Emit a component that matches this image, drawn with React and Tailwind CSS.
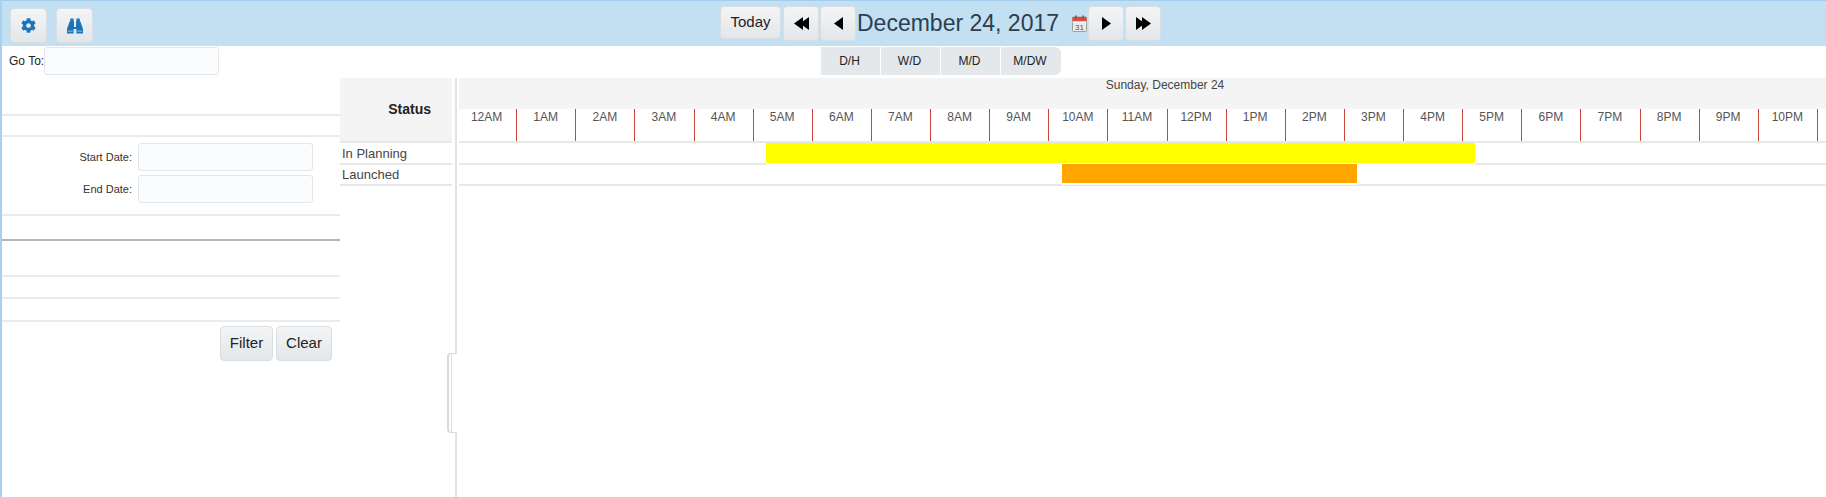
import React from "react";
import { FaCog } from "react-icons/fa";

const hours = ["12AM","1AM","2AM","3AM","4AM","5AM","6AM","7AM","8AM","9AM","10AM","11AM","12PM","1PM","2PM","3PM","4PM","5PM","6PM","7PM","8PM","9PM","10PM",""];
const btn = "flex items-center justify-center rounded border border-[#d9dee2] bg-gradient-to-b from-[#f3f4f5] to-[#e3e7ea]";

function Tri({ dir = "r", double }) {
  const one = dir === "r" ? "M0 0 L9 6.5 L0 13 Z" : "M9 0 L0 6.5 L9 13 Z";
  return (
    <svg width={double ? 15 : 9} height="13" viewBox={double ? "0 0 15 13" : "0 0 9 13"} fill="#000">
      <path d={one} />
      {double && <path d={one} transform="translate(6 0)" />}
    </svg>
  );
}

function Binoculars() {
  return (
    <svg width="16" height="16" viewBox="0 0 16 16" fill="#1b75bc">
      <path d="M3.2 0.5 H6.6 V3.2 H7 V9 H9 V3.2 H9.4 V0.5 H12.8 V3.2 L13.4 3.6 L16 11 V15.5 H9.4 V11 H6.6 V15.5 H0 V11 L2.6 3.6 L3.2 3.2 Z" />
      <rect x="0.8" y="12.6" width="5" height="1" fill="#8fc0e6" />
      <rect x="10.2" y="12.6" width="5" height="1" fill="#8fc0e6" />
    </svg>
  );
}

function CalendarIcon() {
  return (
    <svg width="15" height="17" viewBox="0 0 15 17" className="shrink-0">
      <rect x="0.5" y="2" width="14" height="14.5" rx="1" fill="#e9ece8" stroke="#9a9f9c" />
      <rect x="0.5" y="2" width="14" height="4.5" fill="#dd4a40" />
      <rect x="0.5" y="6.5" width="14" height="1" fill="#f7f7f7" />
      <rect x="3" y="0.5" width="1.6" height="3" fill="#8a4a46" />
      <rect x="10.4" y="0.5" width="1.6" height="3" fill="#8a4a46" />
      <text x="7.5" y="15" textAnchor="middle" fontSize="8" fill="#556" fontFamily="Liberation Sans, sans-serif">31</text>
    </svg>
  );
}

function Section({ h, dark, children, className = "" }) {
  return (
    <div className={`${h} ${dark ? "border-b-2 border-[#b3b7bb]" : "border-b-2 border-[#ebebeb]"} ${className}`}>{children}</div>
  );
}

function DateRow({ label }) {
  return (
    <div className="flex items-center h-[28px]">
      <span className="w-[130px] text-right text-[11px] text-[#333]">{label}</span>
      <div className="ml-[6px] w-[175px] h-[28px] rounded-[3px] border border-[#e4e7ea] bg-[#fbfcfe]" />
    </div>
  );
}

export default function App() {
  return (
    <div className="w-[1826px] h-[497px] overflow-hidden bg-white border-l-2 border-[#a9d0ef] flex flex-col font-['Liberation_Sans',Arial,sans-serif] text-[12px]">
      {/* top bar */}
      <div className="h-[46px] shrink-0 bg-[#c2e0f2] border-t border-[#a4cdec] flex items-start">
        <div className={`${btn} ml-[8px] mt-[7px] w-[37px] h-[35px] text-[#1b75bc]`}><FaCog size={15} /></div>
        <div className={`${btn} ml-[9px] mt-[7px] w-[37px] h-[35px]`}><Binoculars /></div>
        <div className="ml-[627px] mt-[5px] flex items-start text-[#222]">
          <div className={`${btn} w-[61px] h-[33px] text-[15px]`}>Today</div>
          <div className={`${btn} ml-[2px] w-[36px] h-[35px]`}><Tri dir="l" double /></div>
          <div className={`${btn} ml-[1px] w-[36px] h-[35px]`}><Tri dir="l" /></div>
          <span className="ml-[1px] text-[23px] leading-[34px] text-[#2c3e50] whitespace-nowrap">December 24, 2017</span>
          <div className="ml-[13px] mt-[9px]"><CalendarIcon /></div>
          <div className={`${btn} ml-[1px] w-[36px] h-[35px]`}><Tri /></div>
          <div className={`${btn} ml-[1px] w-[36px] h-[35px]`}><Tri double /></div>
        </div>
      </div>

      <div className="flex flex-1 min-h-0">
        {/* filter panel */}
        <div className="w-[338px] shrink-0 flex flex-col">
          <div className="h-[32px] flex items-start pt-[1px]">
            <span className="ml-[7px] w-[35px] leading-[28px] text-[#222] whitespace-nowrap">Go To:</span>
            <div className="w-[175px] h-[28px] rounded-[3px] border border-[#e4e7ea] bg-[#fbfcfe]" />
          </div>
          <Section h="h-[38px]" />
          <Section h="h-[21px]" />
          <Section h="h-[79px]" className="pt-[6px] flex flex-col gap-[4px]">
            <DateRow label="Start Date:" />
            <DateRow label="End Date:" />
          </Section>
          <Section h="h-[25px]" dark />
          <Section h="h-[36px]" />
          <Section h="h-[22px]" />
          <Section h="h-[23px]" />
          <div className="flex justify-end gap-[3px] pr-[8px] pt-[4px] text-[#222]">
            <div className={`${btn} w-[53px] h-[35px] text-[15px] border-[#c6ccd0]`}>Filter</div>
            <div className={`${btn} w-[56px] h-[35px] text-[15px] border-[#c6ccd0]`}>Clear</div>
          </div>
        </div>

        {/* right side */}
        <div className="flex-1 min-w-0 flex flex-col">
          <div className="h-[32px] shrink-0 flex items-start pt-[1px] pl-[481px]">
            {["D/H","W/D","M/D","M/DW"].map((t, i) => (
              <div key={t} className={`w-[60px] h-[28px] pr-[2px] flex items-center justify-center bg-[#e4e8eb] text-[#222] border-r border-white ${i === 3 ? "rounded-br-[6px] rounded-tr-[6px] border-r-0" : ""}`}>{t}</div>
            ))}
          </div>
          <div className="flex flex-1 min-h-0">
            {/* status column */}
            <div className="relative w-[117px] shrink-0 border-r-2 border-[#e3e3e3] flex flex-col">
              <div className="w-[112px] h-[65px] bg-[#f4f4f4] border-b-2 border-[#e8e8e8] flex items-center justify-end pr-[21px] pb-[1px] text-[14px] font-bold text-[#222]">Status</div>
              <div className="w-[112px] h-[22px] border-b-2 border-[#e8e8e8] pl-[2px] leading-[21px] text-[13px] text-[#444] whitespace-nowrap">In Planning</div>
              <div className="w-[112px] h-[21px] border-b-2 border-[#e8e8e8] pl-[2px] leading-[20px] text-[13px] text-[#444] whitespace-nowrap">Launched</div>
              <div className="absolute -right-[2px] top-[275px] w-[10px] h-[80px] rounded-l-[4px] border-l-2 border-y border-[#d9d9d9] bg-white">
                <div className="ml-[2px] h-full border-l border-[#e0e0e0]" />
              </div>
            </div>
            {/* timeline */}
            <div className="flex-1 min-w-0 ml-[2px] overflow-hidden flex flex-col">
              <div className="w-[1367px] h-[31px] shrink-0 bg-[#f4f4f4] text-center text-[12px] leading-[12px] pt-[1px] text-[#444] whitespace-nowrap">
                <div className="w-[1412px]">Sunday, December 24</div>
              </div>
              <div className="flex h-[34px] shrink-0 border-b-2 border-[#e8e8e8] w-[1367px] overflow-hidden">
                {hours.map((h, i) => (
                  <div key={i} className={`w-[59.13px] shrink-0 text-center leading-[14px] pt-[1px] text-[#555] pr-[1px] first:-ml-[1px] ${h ? "border-r border-[#c8453a]" : ""}`}>{h}</div>
                ))}
              </div>
              <div className="h-[22px] shrink-0 border-b-2 border-[#e8e8e8]">
                <div className="relative ml-[307px] w-[709px] h-[22px] bg-[#ffff00] border-b-2 border-white" />
              </div>
              <div className="h-[21px] shrink-0 border-b-2 border-[#e8e8e8]">
                <div className="relative -mt-[1px] ml-[603px] w-[295px] h-[21px] bg-[#ffa500] border-b-2 border-white" />
              </div>
            </div>
          </div>
        </div>
      </div>
    </div>
  );
}
